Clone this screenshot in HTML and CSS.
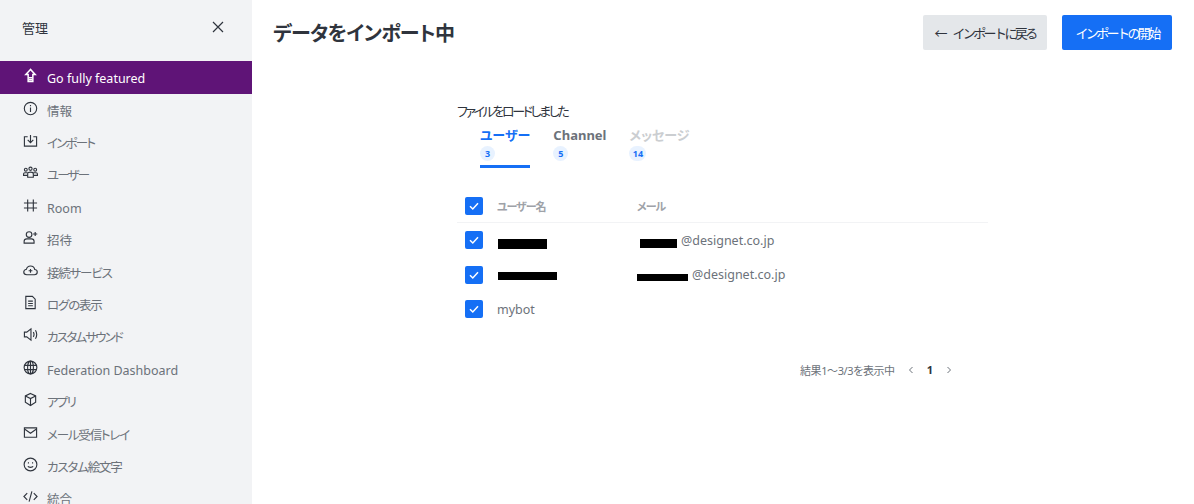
FILE: index.html
```html
<!DOCTYPE html>
<html lang="ja">
<head>
    <meta charset="UTF-8">
    <meta name="viewport" content="width=device-width, initial-scale=1.0">
    <title>データをインポート中</title>
    <link rel="stylesheet" href="styles.css">
</head>
<body>
    <div class="app">
        <aside class="sidebar">
            <div class="sidebar-head">
                <span class="sidebar-title">管理</span>
                <svg class="close-icon" viewBox="0 0 12 12"><path d="M1 1l10 10M11 1L1 11"/></svg>
            </div>
            <nav class="menu">
                <a class="menu-item featured">
                    <svg class="icon" viewBox="0 0 16 16"><path d="M8 1.5L3 7H5.5V14.5H10.5V7H13Z"/><path d="M6 10.5H10M6 12.5H10"/></svg>
                    <span class="en">Go fully featured</span>
                </a>
                <a class="menu-item">
                    <svg class="icon" viewBox="0 0 16 16"><circle cx="8" cy="8" r="6.6"/><path d="M8 4.3v1.2M8 7v4.6"/></svg>
                    <span>情報</span>
                </a>
                <a class="menu-item">
                    <svg class="icon" viewBox="0 0 16 16"><path d="M5 4H1.5V14H14.5V4H11"/><path d="M8 2V10M5 7.3L8 10.3L11 7.3"/></svg>
                    <span class="kana-tight">インポート</span>
                </a>
                <a class="menu-item">
                    <svg class="icon" viewBox="0 0 16 16"><circle cx="3" cy="5" r="1.5"/><circle cx="8" cy="4" r="1.7"/><circle cx="13" cy="5" r="1.5"/><path d="M5 13V9.2C5 8 6 7.6 8 7.6S11 8 11 9.2V13Z"/><path d="M5 8.3H2C1 8.3.6 9 .6 9.7V11H5M11 8.3H14C15 8.3 15.4 9 15.4 9.7V11H11"/></svg>
                    <span class="kana-tight">ユーザー</span>
                </a>
                <a class="menu-item">
                    <svg class="icon" viewBox="0 0 16 16"><path d="M5 1.5V14.5M11 1.5V14.5M1 5.3H15M1 10.7H15"/></svg>
                    <span class="en">Room</span>
                </a>
                <a class="menu-item">
                    <svg class="icon" viewBox="0 0 16 16"><circle cx="6.5" cy="4.8" r="3"/><path d="M1.2 14V12C1.2 10.3 2.4 9.5 4 9.5H9C10.6 9.5 11.8 10.3 11.8 12V14Z"/><path d="M13 2V6.5M10.8 4.2H15.2"/></svg>
                    <span>招待</span>
                </a>
                <a class="menu-item">
                    <svg class="icon" viewBox="0 0 16 16"><path d="M4 12.5H12.2C14 12.5 15.2 11.3 15.2 9.7C15.2 8.2 14 7 12.5 6.9C12.1 4.7 10.3 3.2 8 3.2C5.8 3.2 4.2 4.6 3.7 6.6C2 6.9.8 8.1.8 9.7C.8 11.3 2.1 12.5 4 12.5Z"/><path d="M8 6.3V10.3M6 8.3H10"/></svg>
                    <span class="mixed-tight">接続サービス</span>
                </a>
                <a class="menu-item">
                    <svg class="icon" viewBox="0 0 16 16"><path d="M3 1.5H10L13 4.5V14.5H3Z"/><path d="M5.5 6.5H10.5M5.5 9H10.5M5.5 11.5H10.5"/></svg>
                    <span class="mixed-tight">ログの表示</span>
                </a>
                <a class="menu-item">
                    <svg class="icon" viewBox="0 0 16 16"><path d="M1.5 5.5V10.5H4L8.5 14V2L4 5.5Z"/><path d="M11 5.5C11.8 6.8 11.8 9.2 11 10.5M13.3 3.5C14.8 6 14.8 10 13.3 12.5"/></svg>
                    <span class="kana-tight">カスタムサウンド</span>
                </a>
                <a class="menu-item">
                    <svg class="icon" viewBox="0 0 16 16"><circle cx="8" cy="8" r="6.8"/><ellipse cx="8" cy="8" rx="3.1" ry="6.8"/><path d="M1.5 5.7H14.5M1.5 10.3H14.5M8 1.2V14.8"/></svg>
                    <span class="en">Federation Dashboard</span>
                </a>
                <a class="menu-item">
                    <svg class="icon" viewBox="0 0 16 16"><path d="M8 1.5L13.5 4.2V11L8 14.5L2.5 11V4.2Z"/><path d="M2.5 4.2L8 7L13.5 4.2M8 7V14.5"/></svg>
                    <span class="kana-tight">アプリ</span>
                </a>
                <a class="menu-item">
                    <svg class="icon" viewBox="0 0 16 16"><path d="M1.5 3H14.5V13H1.5Z"/><path d="M2 4.5L8 8.8L14 4.5"/></svg>
                    <span class="mixed-tight">メール受信トレイ</span>
                </a>
                <a class="menu-item">
                    <svg class="icon" viewBox="0 0 16 16"><circle cx="8" cy="8" r="6.8"/><path d="M5.2 9.8C6 11.4 10 11.4 10.8 9.8M5.8 5.5v1.4M10.2 5.5v1.4"/></svg>
                    <span class="mixed-tight">カスタム絵文字</span>
                </a>
                <a class="menu-item">
                    <svg class="icon" viewBox="0 0 16 16"><path d="M4.5 4.5L1 8L4.5 11.5M11.5 4.5L15 8L11.5 11.5M9.5 2.5L6.5 13.5"/></svg>
                    <span>統合</span>
                </a>
            </nav>
        </aside>

        <main class="main">
            <header class="page-head">
                <h1>データをインポート中</h1>
                <div class="actions">
                    <button class="btn btn-secondary"><span class="arrow">←</span>インポートに戻る</button>
                    <button class="btn btn-primary">インポートの開始</button>
                </div>
            </header>

            <section class="content">
                <p class="loaded">ファイルをロードしました</p>

                <div class="tabs">
                    <div class="tab active">ユーザー<span class="count">3</span></div>
                    <div class="tab">Channel<span class="count">5</span></div>
                    <div class="tab disabled">メッセージ<span class="count wide">14</span></div>
                </div>

                <div class="table">
                    <div class="row head">
                        <span class="check"><svg viewBox="0 0 18 18"><path d="M5 9.3L7.8 12L13 6.3"/></svg></span>
                        <span class="col-name">ユーザー名</span>
                        <span class="col-mail">メール</span>
                    </div>
                    <div class="row">
                        <span class="check"><svg viewBox="0 0 18 18"><path d="M5 9.3L7.8 12L13 6.3"/></svg></span>
                        <span class="col-name"><i class="redact name-short"></i></span>
                        <span class="col-mail"><i class="redact mail-short"></i>@designet.co.jp</span>
                    </div>
                    <div class="row">
                        <span class="check"><svg viewBox="0 0 18 18"><path d="M5 9.3L7.8 12L13 6.3"/></svg></span>
                        <span class="col-name"><i class="redact name-long"></i></span>
                        <span class="col-mail"><i class="redact mail-long"></i>@designet.co.jp</span>
                    </div>
                    <div class="row">
                        <span class="check"><svg viewBox="0 0 18 18"><path d="M5 9.3L7.8 12L13 6.3"/></svg></span>
                        <span class="col-name">mybot</span>
                        <span class="col-mail"></span>
                    </div>
                </div>

                <div class="pager">
                    <span class="pager-text">結果1～3/3を表示中</span>
                    <svg class="chev" viewBox="0 0 8 10"><path d="M5.5 2L2.5 5L5.5 8"/></svg>
                    <span class="page-num">1</span>
                    <svg class="chev" viewBox="0 0 8 10"><path d="M2.5 2L5.5 5L2.5 8"/></svg>
                </div>
            </section>
        </main>
    </div>
</body>
</html>
```

FILE: styles.css
```css
html, body {
    margin: 0;
    height: 100%;
    overflow: hidden;
}

body {
    font-family: "Noto Sans", "Noto Sans CJK JP", sans-serif;
    font-size: 13px;
    font-feature-settings: "palt";
    color: #2f343d;
    background-color: white;
}

.app {
    display: flex;
    height: 504px;
    overflow: hidden;
}

/* sidebar */
.sidebar {
    flex: 0 0 252px;
    background-color: #f2f3f5;
    overflow: hidden;
}

.sidebar-head {
    display: flex;
    align-items: center;
    justify-content: space-between;
    height: 61px;
    padding: 0 28px 6px 22px;
    box-sizing: border-box;
}

.sidebar-title {
    font-size: 13px;
    color: #2f343d;
}

.close-icon {
    width: 12px;
    height: 12px;
    margin-bottom: 2px;
    fill: none;
    stroke: #2f343d;
    stroke-width: 1.2;
}

.menu-item {
    display: flex;
    align-items: center;
    gap: 9px;
    height: 32.4px;
    padding-left: 23px;
    color: #6c727a;
    font-size: 12.5px;
}

.menu-item .icon {
    flex: 0 0 15px;
    width: 15px;
    height: 15px;
    margin-top: -4px;
    fill: none;
    stroke: #2f343d;
    stroke-width: 1.2;
}

.menu-item .en {
    margin-top: 2px;
}

/* the katakana labels run narrower than the font sets them */
.kana-tight {
    letter-spacing: -1.8px;
}

.mixed-tight {
    letter-spacing: -1.2px;
}

.menu-item.featured {
    height: 33px;
    background-color: #5f1477;
    color: white;
}

.menu-item.featured .icon {
    stroke: white;
    stroke-width: 1.6;
}

/* main */
.main {
    flex: 1;
    min-width: 0;
}

.page-head {
    display: flex;
    align-items: center;
    justify-content: space-between;
    height: 65px;
    padding: 0 22px 0 21px;
}

h1 {
    margin: 0;
    font-size: 20px;
    font-weight: 700;
    letter-spacing: -0.6px;
    color: #2f343d;
}

.actions {
    display: flex;
    gap: 15px;
}

.btn {
    height: 35px;
    padding: 0;
    border: none;
    border-radius: 2px;
    font-family: inherit;
    font-size: 13px;
    letter-spacing: -2.6px;
    white-space: nowrap;
}

.arrow {
    margin-right: 5px;
    letter-spacing: 0;
}

.btn-secondary {
    width: 124px;
    background-color: #e4e7ea;
    color: #2f343d;
}

.btn-primary {
    width: 110px;
    background-color: #156ff5;
    color: white;
}

.content {
    width: 531px;
    margin-left: 205px;
    padding-top: 36px;
}

.loaded {
    margin: 0;
    font-size: 13px;
    line-height: 20px;
    letter-spacing: -2.4px;
    color: #2f343d;
}

.tabs {
    display: flex;
    gap: 23px;
    margin-left: 23px;
    margin-top: 5px;
}

.tab {
    display: flex;
    flex-direction: column;
    align-items: flex-start;
    gap: 2px;
    padding-bottom: 4px;
    font-size: 13px;
    font-weight: 700;
    line-height: 18px;
    color: #6c727a;
    border-bottom: 3px solid transparent;
}

.tab.active {
    color: #156ff5;
    border-bottom-color: #156ff5;
}

.tab.disabled {
    color: #cbced1;
}

.count {
    min-width: 15px;
    height: 15px;
    padding: 0 1px;
    box-sizing: border-box;
    border-radius: 8px;
    background-color: #e8f2ff;
    color: #156ff5;
    font-size: 9px;
    line-height: 15px;
    text-align: center;
}

.count.wide {
    min-width: 17px;
}

.table {
    margin-top: 22px;
}

.row {
    display: flex;
    align-items: center;
    height: 34.5px;
    padding-left: 8px;
    color: #6c727a;
    font-size: 12.5px;
}

.row.head {
    height: 32px;
    border-bottom: 1px solid #f2f3f5;
    font-size: 11px;
    font-weight: 700;
    letter-spacing: -1px;
    color: #9ea2a8;
}

.check {
    flex: 0 0 18px;
    width: 18px;
    height: 18px;
    border-radius: 2px;
    background-color: #156ff5;
}

.check svg {
    display: block;
    fill: none;
    stroke: white;
    stroke-width: 1.5;
}

.col-name {
    flex: 0 0 140px;
    margin-left: 14px;
}

.col-mail {
    flex: 1;
    white-space: nowrap;
}

.redact {
    display: inline-block;
    background-color: black;
}

.name-short {
    width: 49px;
    height: 10px;
    vertical-align: -4px;
    margin-left: 1px;
}

.name-long {
    width: 59px;
    height: 8px;
    vertical-align: -1px;
    margin-left: 1px;
}

.mail-short {
    width: 37px;
    height: 9px;
    margin: 0 4px 0 3px;
    vertical-align: -3px;
}

.mail-long {
    width: 51px;
    height: 7px;
    margin-right: 4px;
    vertical-align: -2px;
}

.pager {
    display: flex;
    align-items: center;
    justify-content: flex-end;
    margin-top: 35px;
    padding-right: 35px;
    font-size: 11px;
    color: #6c727a;
}

.pager-text {
    letter-spacing: -0.4px;
}

.chev {
    width: 8px;
    height: 10px;
    fill: none;
    stroke: #6c727a;
    stroke-width: 1;
}

.pager-text + .chev {
    margin-left: 12px;
}

.page-num {
    margin: 0 12px;
    font-weight: 700;
    color: #2f343d;
}
```
